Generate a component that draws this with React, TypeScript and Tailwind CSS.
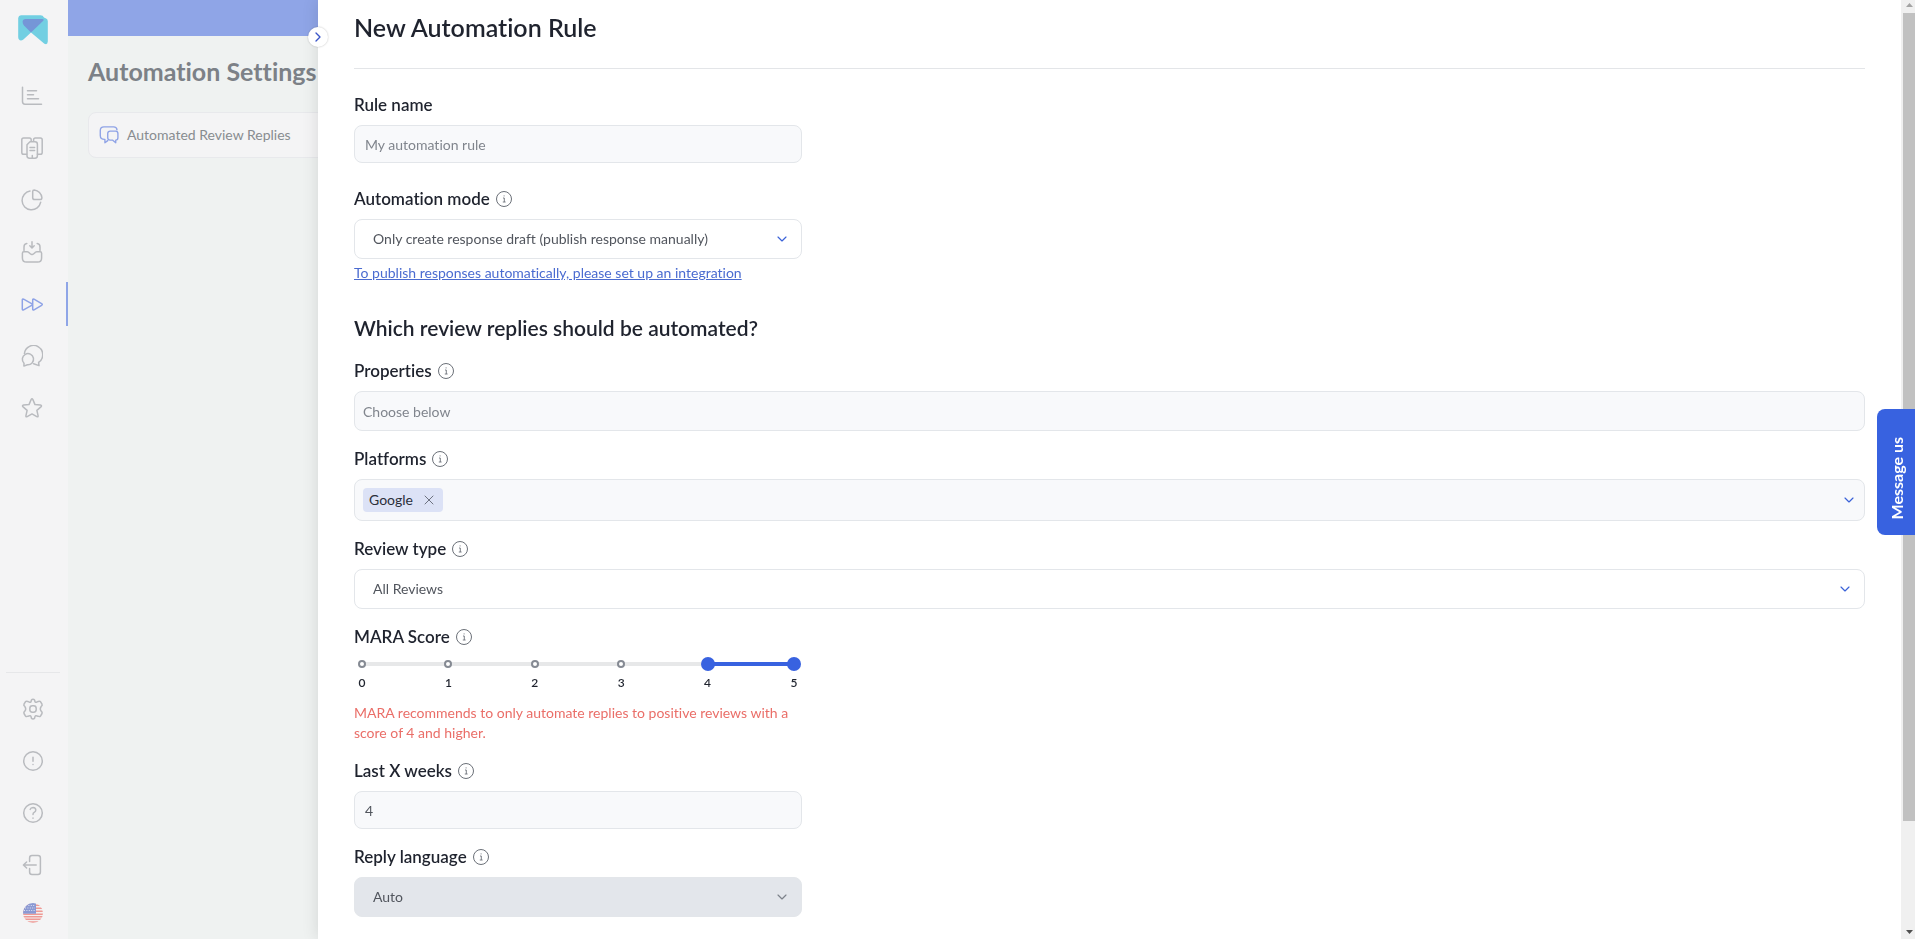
import { useState } from 'react';
import type { ReactNode } from 'react';
import { ChevronDown, ChevronRight, X } from 'lucide-react';

type IconProps = { className?: string; children: ReactNode };

const Icon = ({ className = 'size-[22px]', children }: IconProps) => (
  <svg
    viewBox="0 0 22 22"
    fill="none"
    stroke="currentColor"
    strokeWidth="1.5"
    strokeLinecap="round"
    strokeLinejoin="round"
    className={className}
    aria-hidden="true"
  >
    {children}
  </svg>
);

const Logo = () => (
  <svg viewBox="0 0 30 30" className="size-[30px]" aria-hidden="true">
    <path
      d="M3 .3H22.5Q25 .3 26 2.6L27.6 3.2Q29.8 4 29.8 6V26.6Q29.5 30.2 26.4 28.7L13 17.4L5.4 24.6Q2.6 26.4 1 24.6Q.2 23.6 .2 22V3Q.5 .4 3 .3Z"
      fill="#72cfe2"
    />
    <path d="M7.6 4H24Q26.8 4 25 6L13 17.4L6 10.6Q4.6 9 4.6 6.8Q4.8 4 7.6 4Z" fill="#7596d7" />
  </svg>
);

const navItems = [
  {
    name: 'Analytics',
    icon: (
      <Icon>
        <path d="M1.5 2.2V16.5Q1.5 19.2 4 19.2H20.5M6.5 5.8H15.5M6.5 9.8H12.5M6.5 13.8H17.5" />
      </Icon>
    ),
  },
  {
    name: 'Reports',
    icon: (
      <Icon>
        <path d="M5.6 17.3H2.6Q.8 17.3.8 15.5V2.7Q.8.9 2.6.9H8.4Q10.2.9 10.2 2.7V4M16.4 17.3H19.4Q21.2 17.3 21.2 15.5V2.7Q21.2.9 19.4.9H14.4Q12.6.9 12.6 2.7V4" />
        <path d="M9 4.8H14Q16.4 4.8 16.4 7.2V18.8Q16.4 21.2 14 21.2H8.4Q6 21.2 6 18.8V7.8ZM9 10.4H13.6M9 13.4H13.6M11.3 18.5V21" />
      </Icon>
    ),
  },
  {
    name: 'Statistics',
    icon: (
      <Icon>
        <path d="M9 2.1A9.4 9.4 0 1 0 19.7 13.2" />
        <path d="M11.7 2.6Q11.7 1 13.3 1A8.6 8.6 0 0 1 20.9 8.8Q20.9 10.6 19.2 10.6H13.6Q11.7 10.6 11.7 8.8Z" />
      </Icon>
    ),
  },
  {
    name: 'Inbox',
    icon: (
      <Icon>
        <path d="M3 9.6V6Q3 2.9 5.8 2.6M19 9.6V6Q19 2.9 16.2 2.6M11 .8V6.4M8.8 4.8L11 7L13.2 4.8" />
        <path d="M1.4 12.2Q1.4 10.8 2.8 10.8H6.2Q7.5 10.8 8.4 12Q11 15 13.6 12Q14.5 10.8 15.8 10.8H19.2Q20.6 10.8 20.6 12.2V17Q20.6 21.1 16.5 21.1H5.5Q1.4 21.1 1.4 17Z" />
      </Icon>
    ),
  },
  {
    name: 'Automation',
    active: true,
    icon: (
      <Icon>
        <path d="M1.3 7.1Q1.3 5.6 2.6 6.2L10.6 10.6Q12 11.5 10.6 12.4L2.6 16.9Q1.3 17.5 1.3 16ZM11.7 7.1Q11.7 5.6 13 6.2L20.6 10.6Q22 11.5 20.6 12.4L13 16.9Q11.7 17.5 11.7 16Z" />
      </Icon>
    ),
  },
  {
    name: 'Conversations',
    icon: (
      <Icon>
        <path d="M3.4 8.5A9.2 9.2 0 1 1 17.6 17.3L18 20.6L12.6 18.7" />
        <path d="M3 19L2.9 21.1L6.4 19.8A5.6 5.6 0 1 0 3 18.2Z" />
      </Icon>
    ),
  },
  {
    name: 'Favorites',
    icon: (
      <Icon>
        <path d="M10.1 2.6Q11 1 11.9 2.6L14 7.6L19.4 8.1Q21.3 8.5 19.9 9.9L15.9 13.4L17.1 18.8Q17.3 20.4 15.8 19.6L11 16.9L6.2 19.6Q4.7 20.4 4.9 18.8L6.1 13.4L2.1 9.9Q.7 8.5 2.6 8.1L8 7.6Z" />
      </Icon>
    ),
  },
];

const bottomItems = [
  {
    name: 'Settings',
    icon: (
      <Icon>
        <path d="M9.2 3.1Q9.2 1.2 11 1.2T12.8 3.1Q13 4.6 14.6 4.2Q17.6 2.6 18.6 3.8L20 6.2Q20.6 7.5 19.2 8.4Q17.4 11 19.2 13.2Q20.6 14.2 20 15.5L18.6 17.9Q17.6 19 16 18.2Q13.1 16.9 12.8 19.2Q12.8 20.9 11 20.9T9.2 19.2Q8.9 16.9 6 18.2Q4.4 19 3.4 17.9L2 15.5Q1.4 14.2 2.8 13.2Q4.6 11 2.8 8.4Q1.4 7.5 2 6.2L3.4 3.8Q4.4 2.6 7.4 4.2Q9 4.6 9.2 3.1Z" />
        <rect x="7.8" y="7.8" width="6.4" height="6.4" rx="2.6" />
      </Icon>
    ),
  },
  {
    name: 'Alerts',
    icon: (
      <Icon>
        <circle cx="11" cy="11" r="9.3" />
        <path d="M11 7.3V11.3M11 14.4V14.6" />
      </Icon>
    ),
  },
  {
    name: 'Help',
    icon: (
      <Icon>
        <circle cx="11" cy="11" r="9.3" />
        <path d="M8.2 7.4Q8.8 5.4 11 5.4Q13.8 5.6 13.8 8Q13.8 9.6 12.2 10.4Q11 11 11 12.6M11 16.1V16.3" />
      </Icon>
    ),
  },
  {
    name: 'Log out',
    icon: (
      <Icon>
        <path d="M7.6 7.4V4Q7.6 1.5 10 1.5H16Q18.4 1.5 18.4 4V18Q18.4 20.5 16 20.5H10Q7.6 20.5 7.6 18V14.6M14.2 11H1.6M4.6 8L1.4 11L4.6 14" />
      </Icon>
    ),
  },
];

const UsFlag = () => (
  <svg viewBox="0 0 20 20" className="size-5" aria-hidden="true">
    <defs>
      <clipPath id="flag">
        <circle cx="10" cy="10" r="10" />
      </clipPath>
    </defs>
    <g clipPath="url(#flag)">
      <rect width="20" height="20" fill="#f4f0f0" />
      <path d="M0 2.3H20M0 5.3H20M0 8.3H20M0 11.3H20M0 13.8H20M0 16.3H20M0 19H20" stroke="#ee9a96" strokeWidth="1.4" />
      <rect width="13" height="10.7" fill="#8b99d3" />
      <path d="M3 2.5H12M2 5H12M1 7.5H12" stroke="#dfe3f3" strokeWidth="1" strokeDasharray="1 1.4" />
    </g>
  </svg>
);

const InfoIcon = () => (
  <svg viewBox="0 0 16 16" fill="none" stroke="#6b7078" className="size-4" aria-hidden="true">
    <circle cx="8" cy="8" r="7.5" />
    <path d="M7 7H8.3V11M6.8 11H9.6M7.6 4.9H8.6" strokeWidth="0.9" />
  </svg>
);

type FieldLabelProps = { id: string; children: ReactNode; info?: boolean };

const FieldLabel = ({ id, children, info = true }: FieldLabelProps) => (
  <div className="mb-2 flex h-6 items-center gap-1.5">
    <label htmlFor={id} className="text-[17px] leading-6 font-semibold text-[#1f232e]">
      {children}
    </label>
    {info && <InfoIcon />}
  </div>
);

type SelectFieldProps = { id: string; options: string[]; disabled?: boolean };

const SelectField = ({ id, options, disabled }: SelectFieldProps) => (
  <div className="relative">
    <select
      id={id}
      disabled={disabled}
      className="block h-10 w-full appearance-none rounded-lg border border-[#e3e6ea] bg-white pr-10 pl-[18px] text-sm text-[#51555d] opacity-100 disabled:bg-[#e3e6eb]"
    >
      {options.map((option) => (
        <option key={option}>{option}</option>
      ))}
    </select>
    <ChevronDown
      className={`pointer-events-none absolute top-3 right-3 size-4 ${disabled ? 'text-[#7d828a]' : 'text-[#3a62d8]'}`}
      strokeWidth={1.75}
    />
  </div>
);

const MAX_SCORE = 5;
const scores = [0, 1, 2, 3, 4, 5];

const thumbClass =
  'pointer-events-none absolute inset-0 m-0 h-3.5 w-full appearance-none bg-transparent [&::-webkit-slider-thumb]:pointer-events-auto [&::-webkit-slider-thumb]:size-3.5 [&::-webkit-slider-thumb]:appearance-none [&::-webkit-slider-thumb]:rounded-full [&::-webkit-slider-thumb]:bg-[#3862e0]';

const ScoreSlider = () => {
  const [low, setLow] = useState(4);
  const [high, setHigh] = useState(5);

  return (
    <div className="mx-px pt-2">
      <div className="relative h-3.5">
        <div className="mx-[7px] flex h-full items-center">
          <div className="h-1 w-full bg-[#e7e8e9]">
            <div
              className="h-1 bg-[#3862e0]"
              style={{
                marginLeft: `${(low / MAX_SCORE) * 100}%`,
                width: `${((high - low) / MAX_SCORE) * 100}%`,
              }}
            />
          </div>
        </div>
        <div className="absolute inset-0 flex items-center justify-between px-[3px]">
          {scores.map((score) => (
            <span key={score} className="size-2 rounded-full border-2 border-[#858a93] bg-white" />
          ))}
        </div>
        <input
          id="score"
          type="range"
          min={0}
          max={MAX_SCORE}
          value={low}
          onChange={(e) => setLow(Math.min(Number(e.target.value), high))}
          className={thumbClass}
        />
        <input
          type="range"
          aria-label="Maximum score"
          min={0}
          max={MAX_SCORE}
          value={high}
          onChange={(e) => setHigh(Math.max(Number(e.target.value), low))}
          className={thumbClass}
        />
      </div>
      <div className="mt-1 flex justify-between text-xs font-semibold text-[#1f232e]">
        {scores.map((score) => (
          <span key={score} className="w-3.5 text-center">
            {score}
          </span>
        ))}
      </div>
    </div>
  );
};

const Sidebar = () => (
  <aside className="flex w-[68px] shrink-0 flex-col bg-[#f4f4f5] pb-4 text-[#b9bbbf] shadow-lg">
    <a href="#home" aria-label="Home" className="mt-[15px] ml-[18px] self-start">
      <Logo />
    </a>
    <nav className="mt-[29px] flex flex-col gap-2">
      {navItems.map((item) => (
        <a
          key={item.name}
          href="#nav"
          aria-label={item.name}
          className={`flex h-11 items-center border-r-2 pl-[21px] ${item.active ? 'border-[#8fa5e7] text-[#8fa3e6]' : 'border-transparent'}`}
        >
          {item.icon}
        </a>
      ))}
    </nav>
    <div className="mr-2 ml-1.5 mt-auto mb-3.5 border-t border-[#e6e7e9]" />
    <div className="flex flex-col items-center gap-2 pr-0.5">
      {bottomItems.map((item) => (
        <button key={item.name} type="button" aria-label={item.name} className="flex h-11 items-center">
          {item.icon}
        </button>
      ))}
      <button type="button" aria-label="Language" className="mt-2">
        <UsFlag />
      </button>
    </div>
  </aside>
);

const SettingsPage = () => (
  <main className="min-w-0 flex-1 bg-[#eff2f1]">
    <div className="h-9 bg-[#8fa5e7]" />
    <div className="px-5 pt-5">
      <h1 className="text-[25px] leading-[30px] font-bold text-[#7c8187]">Automation Settings</h1>
      <div className="mt-[26px] flex h-[46px] items-center gap-2 rounded-lg border border-[#e8e9ec] bg-[#f4f4f5] px-2.5">
        <Icon className="size-5 text-[#8fa3e6]">
          <path d="M6.5 15.8Q1.4 16 1.4 11.5V6Q1.4 2 5.4 2H16Q19.5 2 19.8 5.4M6.5 15.8V19.6L9.6 17.2" />
          <path d="M12.4 6.8H18.2Q20.8 6.8 20.8 9.4V14Q20.8 16.6 18.4 16.6V19.6L14.8 16.6H12.2Q9.6 16.6 9.6 14V9.4Q9.6 6.8 12.4 6.8Z" />
        </Icon>
        <span className="text-sm text-[#888c90]">Automated Review Replies</span>
      </div>
    </div>
  </main>
);

const RuleDrawer = () => (
  <section className="fixed inset-y-0 right-0 left-[318px] flex bg-white shadow-[0_0_16px_rgba(0,0,0,0.12)]">
    <button
      type="button"
      aria-label="Close panel"
      className="absolute top-[27px] -left-2.5 flex size-5 items-center justify-center rounded-full bg-white text-[#3a55c8] shadow-[0_0_2px_rgba(0,0,0,0.25)]"
    >
      <ChevronRight className="size-4" strokeWidth={2} />
    </button>

    <form className="min-w-0 flex-1 overflow-hidden px-9 pt-3">
      <h2 className="border-b border-[#e3e5e8] pb-[26px] text-[25px] leading-[30px] font-semibold text-[#1f232e]">
        New Automation Rule
      </h2>

      <div className="mt-6 max-w-[448px]">
        <FieldLabel id="name" info={false}>
          Rule name
        </FieldLabel>
        <input
          id="name"
          type="text"
          placeholder="My automation rule"
          className="block h-[38px] w-full rounded-lg border border-[#e3e6ea] bg-[#f8f9fb] px-2.5 text-sm text-[#51555d] placeholder:text-[#80858d]"
        />
      </div>

      <div className="mt-6 max-w-[448px]">
        <FieldLabel id="mode">Automation mode</FieldLabel>
        <SelectField
          id="mode"
          options={['Only create response draft (publish response manually)', 'Publish response automatically']}
        />
        <a href="#integrations" className="mt-1 block text-sm whitespace-nowrap text-[#4a6bd0] underline">
          To publish responses automatically, please set up an integration
        </a>
      </div>

      <h3 className="mt-8 text-[21px] leading-[26px] font-semibold text-[#1f232e]">
        Which review replies should be automated?
      </h3>

      <div className="mt-[18px]">
        <FieldLabel id="properties">Properties</FieldLabel>
        <input
          id="properties"
          type="text"
          placeholder="Choose below"
          className="block h-10 w-full rounded-lg border border-[#e3e6ea] bg-[#f8f9fb] px-2 text-sm text-[#51555d] placeholder:text-[#80858d]"
        />
      </div>

      <div className="mt-4">
        <FieldLabel id="platforms">Platforms</FieldLabel>
        <div className="flex h-[42px] items-center gap-2 rounded-lg border border-[#e3e6ea] bg-[#f8f9fb] pr-[7px] pl-2">
          <span className="flex h-6 items-center gap-2 rounded bg-[#dce2f6] px-1.5 text-sm text-[#2b2f3a]">
            Google
            <button type="button" aria-label="Remove Google">
              <X className="size-4 text-[#6d7280]" strokeWidth={1.5} />
            </button>
          </span>
          <input id="platforms" type="text" className="h-6 min-w-0 flex-1 bg-transparent text-sm outline-none" />
          <ChevronDown className="size-4 text-[#3a62d8]" strokeWidth={1.75} />
        </div>
      </div>

      <div className="mt-4">
        <FieldLabel id="type">Review type</FieldLabel>
        <SelectField id="type" options={['All Reviews', 'Reviews with text', 'Reviews without text']} />
      </div>

      <div className="mt-4 max-w-[448px]">
        <div className="-mb-2">
          <FieldLabel id="score">MARA Score</FieldLabel>
        </div>
        <ScoreSlider />
        <p className="mt-3 text-sm text-[#ea6e68]">
          MARA recommends to only automate replies to positive reviews with a score of 4 and higher.
        </p>
      </div>

      <div className="mt-4 max-w-[448px]">
        <FieldLabel id="weeks">Last X weeks</FieldLabel>
        <input
          id="weeks"
          type="text"
          inputMode="numeric"
          defaultValue="4"
          className="block h-[38px] w-full rounded-lg border border-[#e3e6ea] bg-[#f8f9fb] px-2.5 text-sm text-[#51555d]"
        />
      </div>

      <div className="mt-4 max-w-[448px]">
        <FieldLabel id="language">Reply language</FieldLabel>
        <SelectField id="language" options={['Auto']} disabled />
      </div>
    </form>

    {/* scrollbar */}
    <div className="flex w-3.5 flex-col items-end bg-[#f0f0f0]" aria-hidden="true">
      <svg viewBox="0 0 12 13" className="w-3 shrink-0">
        <path d="M3 7L6.5 3L10 7Z" fill="#a3a3a3" />
      </svg>
      <div className="w-3 flex-[808] bg-[#c1c1c1]" />
      <div className="flex-[105]" />
      <svg viewBox="0 0 12 13" className="w-3 shrink-0">
        <path d="M3 4L6.5 8L10 4Z" fill="#505050" />
      </svg>
    </div>
  </section>
);

const App = () => (
  <div className="flex h-screen overflow-hidden font-['Lato','Open_Sans',sans-serif] [font-variant-ligatures:none]">
    <Sidebar />
    <SettingsPage />
    <RuleDrawer />
    <button
      type="button"
      className="fixed top-[409px] right-0 flex h-[126px] w-[38px] items-end justify-center rounded-l-lg bg-[#3862e0] pb-4 pl-0.5 text-base font-bold whitespace-nowrap text-white"
    >
      <span className="rotate-180 [writing-mode:vertical-rl]">Message us</span>
    </button>
  </div>
);

export default App;
